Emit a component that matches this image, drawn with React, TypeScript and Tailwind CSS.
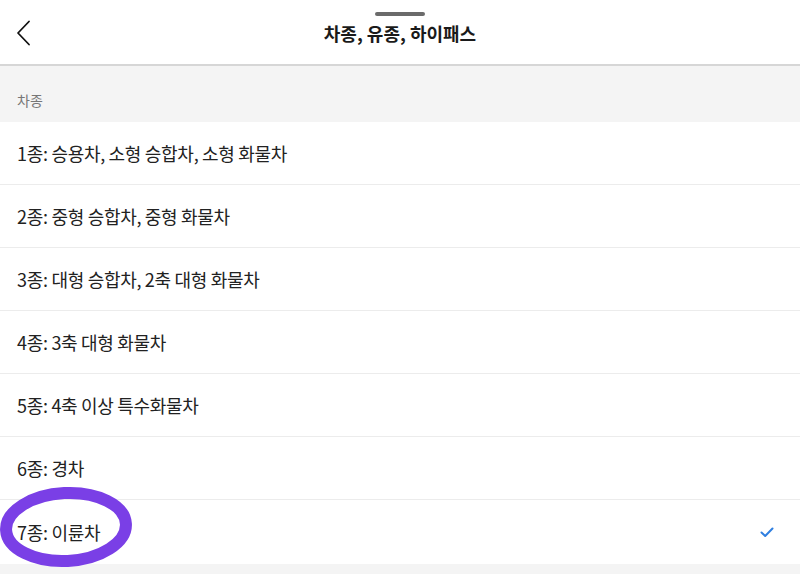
import React from "react";

const items = [
  "1종: 승용차, 소형 승합차, 소형 화물차",
  "2종: 중형 승합차, 중형 화물차",
  "3종: 대형 승합차, 2축 대형 화물차",
  "4종: 3축 대형 화물차",
  "5종: 4축 이상 특수화물차",
  "6종: 경차",
  "7종: 이륜차",
];

export default function App() {
  return (
    <div
      className="relative w-[800px] h-[574px] overflow-hidden bg-[#f4f4f4]"
      style={{ fontFamily: '"Noto Sans CJK KR", "Noto Sans", sans-serif' }}
    >
      <header className="relative h-[66px] bg-white border-b-2 border-[#d6d6d6] flex items-center justify-center">
        <div className="absolute top-[12px] left-[375px] w-[50px] h-[4px] rounded-full bg-[#6b6b6b]" />
        <button className="absolute left-[11px] top-[18px] w-[24px] h-[30px] flex items-center justify-center">
          <svg width="16" height="26" viewBox="0 0 16 26" fill="none">
            <path d="M14 1.5 L3 13 L14 24.5" stroke="#111" strokeWidth="1.8" strokeLinecap="round" strokeLinejoin="round" />
          </svg>
        </button>
        <h1 className="text-[18px] font-bold text-[#1a1a1a] tracking-[0px] leading-none mt-[1px]">
          차종, 유종, 하이패스
        </h1>
      </header>
      <div className="h-[56px] px-[17px] flex items-end pb-[11px] text-[14px] text-[#777]">차종</div>
      <ul className="bg-white">
        {items.map((t, i) => (
          <li
            key={i}
            className={`flex items-center justify-between pl-[17px] pr-[26px] text-[18px] text-[#222] tracking-[-0.3px] ${
              i < items.length - 1 ? "h-[63px] border-b border-[#ececec]" : "h-[64px]"
            }`}
          >
            <span>{t}</span>
            {i === items.length - 1 && (
              <svg width="14" height="11" viewBox="0 0 14 11" fill="none">
                <path d="M1.5 5.5 L5.2 9 L12.5 1.5" stroke="#2f7fe0" strokeWidth="2" strokeLinecap="round" strokeLinejoin="round" />
              </svg>
            )}
          </li>
        ))}
      </ul>
      <svg className="absolute left-0 top-[485px] pointer-events-none" width="140" height="86" viewBox="0 0 140 86">
        <ellipse cx="66" cy="42" rx="60" ry="34" stroke="#7a3fe6" strokeWidth="12" fill="none" transform="rotate(-3 66 42)" />
      </svg>
    </div>
  );
}
